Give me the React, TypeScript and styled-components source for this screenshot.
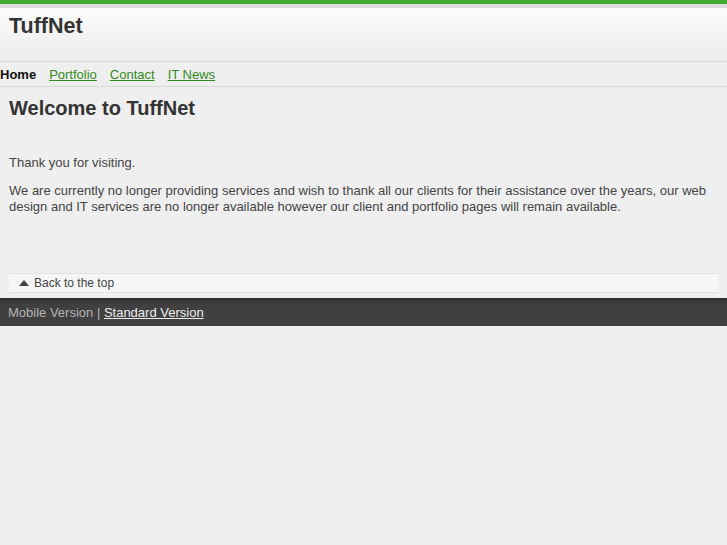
import styled, { createGlobalStyle } from "styled-components";

const GlobalStyle = createGlobalStyle`
    html, body {
        margin: 0;
        padding: 0;
        background: #efefef;
        font-family: "Liberation Sans", Arial, sans-serif;
        color: #444;
    }
`;

const Page = styled.div`
    min-height: 545px;
    background: #efefef;
`;

const TopStripe = styled.div`
    height: 4px;
    background: #44a835;
    border-bottom: 4px solid #dcdcdc;
`;

const Header = styled.header`
    height: 53px;
    padding: 0 9px;
    background: linear-gradient(#fbfbfb, #ececec);
    border-bottom: 1px solid #d8d8d8;
`;

const SiteTitle = styled.h1`
    margin: 0;
    padding-top: 6px;
    font-size: 21.5px;
    line-height: 24px;
    font-weight: bold;
    color: #333;
`;

const Nav = styled.nav`
    display: flex;
    align-items: center;
    gap: 13px;
    height: 24px;
    border-bottom: 1px solid #d8d8d8;
    font-size: 13px;
`;

const NavLink = styled.a<{ $active?: boolean }>`
    color: ${(p) => (p.$active ? "#111" : "#2f8a22")};
    font-weight: ${(p) => (p.$active ? "bold" : "normal")};
    text-decoration: ${(p) => (p.$active ? "none" : "underline")};
`;

const Content = styled.main`
    padding: 0 9px;
`;

const Heading = styled.h2`
    margin: 0;
    padding-top: 10px;
    font-size: 20px;
    line-height: 22px;
    font-weight: bold;
    color: #333;
`;

const Para = styled.p`
    margin: 0;
    font-size: 13px;
    line-height: 16px;
    color: #444;
`;

const Intro = styled(Para)`
    margin: 36px 0 12px;
`;

const BackBar = styled.div`
    display: flex;
    align-items: center;
    gap: 4px;
    margin-top: 58px;
    height: 18px;
    padding-left: 10px;
    background: #f6f6f6;
    border-top: 1px solid #e2e2e2;
    border-bottom: 1px solid #e2e2e2;
    font-size: 12px;
    color: #444;
`;

const Triangle = styled.span`
    width: 0;
    height: 0;
    border-left: 5px solid transparent;
    border-right: 5px solid transparent;
    border-bottom: 6px solid #444;
    margin-right: 1px;
`;

const Footer = styled.footer`
    margin-top: 5px;
    height: 28px;
    display: flex;
    align-items: center;
    padding: 0 8px;
    background: linear-gradient(#2e2e2e, #404040 6px);
    font-size: 13px;
    color: #b5b5b5;
    white-space: pre;
`;

const FooterLink = styled.a`
    color: #eee;
    text-decoration: underline;
`;

export default function App() {
    return (
        <Page>
            <GlobalStyle />
            <TopStripe />
            <Header>
                <SiteTitle>TuffNet</SiteTitle>
            </Header>
            <Nav>
                <NavLink $active>Home</NavLink>
                <NavLink href="#">Portfolio</NavLink>
                <NavLink href="#">Contact</NavLink>
                <NavLink href="#">IT News</NavLink>
            </Nav>
            <Content>
                <Heading>Welcome to TuffNet</Heading>
                <Intro>Thank you for visiting.</Intro>
                <Para>
                    We are currently no longer providing services and wish to thank all our clients for their assistance over the years, our web design and IT services are no longer available however our client and portfolio pages will remain available.
                </Para>
                <BackBar>
                    <Triangle />
                    Back to the top
                </BackBar>
            </Content>
            <Footer>
                {"Mobile Version | "}<FooterLink href="#">Standard Version</FooterLink>
            </Footer>
        </Page>
    );
}
